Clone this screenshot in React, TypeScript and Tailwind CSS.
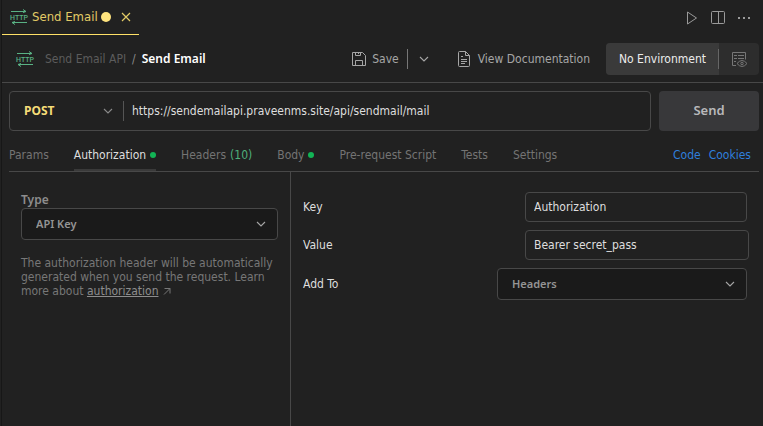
import React, { useId, useState } from "react";

type IconProps = { className?: string };

function HttpIcon({ className = "" }: IconProps) {
  return (
    <svg viewBox="0 0 18 16" aria-hidden="true" className={`h-4 w-[18px] shrink-0 overflow-visible text-[#59b184] ${className}`}>
      <g fill="none" stroke="currentColor" strokeWidth="1">
        <path d="M1 2.500h15M13 0.500l3 2-3 1" />
        <path d="M17 13.500H2M5 12.500l-3 1 3 2" />
      </g>
      <text
        x="9"
        y="11"
        textAnchor="middle"
        fill="currentColor"
        className="font-['Roboto',sans-serif] text-[7px] font-medium"
      >
        HTTP
      </text>
    </svg>
  );
}

function Chevron({ className = "" }: IconProps) {
  return (
    <svg viewBox="0 0 10 6" aria-hidden="true" className={`h-[6px] w-[10px] shrink-0 ${className}`}>
      <path d="M1 1l4 4 4-4" fill="none" stroke="currentColor" strokeWidth="1.1" />
    </svg>
  );
}

function SaveIcon() {
  return (
    <svg viewBox="0 0 16 16" aria-hidden="true" className="size-4 shrink-0" fill="none" stroke="currentColor">
      <path d="M1.500 1.500h10l3 3v10h-13zM4.500 1.500v3h5v-3M4.500 14.500v-5h7v5M7.500 2v1" />
    </svg>
  );
}

function DocumentIcon() {
  return (
    <svg viewBox="0 0 14 16" aria-hidden="true" className="h-4 w-[14px] shrink-0" fill="none" stroke="currentColor">
      <path d="M2.500 0.500h6l4 4v10q0 1-1 1h-9q-1 0-1-1v-13q0-1 1-1zM8.500 0.500v4h4M4 5.500h2M4 8.500h6M4 10.500h6M4 12.500h4" />
    </svg>
  );
}

function EnvironmentIcon() {
  return (
    <svg viewBox="0 0 16 16" aria-hidden="true" className="size-4" fill="none" stroke="currentColor">
      <path d="M5 14.500H1.500v-13h13v7M3 4.500h3M7 4.500h6M3 7.500h3M7 7.500h6M3 10.500h2" />
      <path d="M6 12.500q5-6 10 0-5 6-10 0z" />
      <circle cx="11" cy="12.500" r="1.200" />
    </svg>
  );
}

type SelectProps = {
  id?: string;
  label?: string;
  options: string[];
  className: string;
  chevronClass: string;
};

function Select({ id, label, options, className, chevronClass }: SelectProps) {
  return (
    <div className="grid items-center">
      <select
        id={id}
        aria-label={label}
        className={`col-start-1 row-start-1 w-full appearance-none font-['Noto_Sans',sans-serif] outline-none ${className}`}
      >
        {options.map((o) => (
          <option key={o}>{o}</option>
        ))}
      </select>
      <Chevron className={`pointer-events-none col-start-1 row-start-1 justify-self-end ${chevronClass}`} />
    </div>
  );
}

const boxedSelect =
  "h-8 rounded border border-[#484848] bg-[#1a1a1a] px-[14px] text-[11px] font-semibold text-[#949494]";
const boxedInput =
  "h-[30px] w-full rounded border border-[#484848] bg-transparent px-2 text-[12px] text-[#dedede] outline-none";

const tabs = [
  { name: "Params" },
  { name: "Authorization", dot: true },
  { name: "Headers", count: 10 },
  { name: "Body", dot: true },
  { name: "Pre-request Script" },
  { name: "Tests" },
  { name: "Settings" },
];

function EditorTabs() {
  return (
    <header className="flex h-[35px] items-stretch justify-between">
      <div className="flex w-[137px] items-center border-b border-[#ffe167] pl-2 text-[#e3cb66]">
        <HttpIcon />
        <span className="ml-1 text-[13px] whitespace-nowrap">Send Email</span>
        <span className="ml-[3px] size-[10px] rounded-full bg-[#ffe47e]" />
        <button aria-label="Close tab" className="ml-[10px]">
          <svg viewBox="0 0 10 10" className="size-[10px]" fill="none" stroke="currentColor" strokeWidth="1.2">
            <path d="M1 1l8 8M9 1l-8 8" />
          </svg>
        </button>
      </div>
      <div className="flex items-center gap-3 pr-3 text-[#9a9a9a]">
        <button aria-label="Run">
          <svg viewBox="0 0 14 14" className="size-[14px]" fill="none" stroke="currentColor">
            <path d="M2.500 1v12l9-6z" />
          </svg>
        </button>
        <button aria-label="Split editor">
          <svg viewBox="0 0 14 14" className="size-[14px]" fill="none" stroke="currentColor">
            <path d="M1.500 0.500h11q1 0 1 1v10q0 1-1 1h-11q-1 0-1-1v-10q0-1 1-1zM7.500 1v11" />
          </svg>
        </button>
        <button aria-label="More actions">
          <svg viewBox="0 0 14 14" className="size-[14px]" fill="currentColor">
            <path d="M1 6h2v2H1zM6 6h2v2H6zM11 6h2v2h-2z" />
          </svg>
        </button>
      </div>
    </header>
  );
}

function Toolbar() {
  return (
    <div className="flex h-12 items-center border-b border-[#484848] pr-1 pl-[14px] text-[12px] whitespace-nowrap">
      <HttpIcon />
      <nav aria-label="Breadcrumb" className="ml-[11px] flex gap-[6px]">
        <span className="text-[#5c5c5c]">Send Email API</span>
        <span className="text-[#8a8a8a]">/</span>
        <span className="font-['Noto_Sans',sans-serif] font-semibold text-white">Send Email</span>
      </nav>
      <div className="ml-auto flex items-center text-[#a6a6a6]">
        <button className="flex items-center gap-[5px]">
          <SaveIcon />
          Save
        </button>
        <span className="ml-2 h-5 w-px bg-[#777]" />
        <button aria-label="Save options" className="ml-[11px]">
          <Chevron />
        </button>
        <button className="ml-7 flex items-center gap-[7px]">
          <DocumentIcon />
          View Documentation
        </button>
        <div className="ml-4 flex h-8 items-center rounded bg-[#2d2d2d]">
          <button className="flex h-full w-[113px] items-center justify-center rounded-l bg-[#3a3a3a] text-[#ececec]">
            No Environment
          </button>
          <span className="-ml-px h-5 w-px bg-[#666]" />
          <button aria-label="View environment" className="flex w-10 justify-center text-[#777]">
            <EnvironmentIcon />
          </button>
        </div>
      </div>
    </div>
  );
}

function RequestBar() {
  const [url, setUrl] = useState("https://sendemailapi.praveenms.site/api/sendmail/mail");
  return (
    <form className="flex gap-2 pt-2 pr-1 pl-[7px]" onSubmit={(e) => e.preventDefault()}>
      <div className="flex h-10 min-w-0 flex-1 items-center rounded border border-[#484848]">
        <div className="w-[113px]">
          <Select
            label="Method"
            options={["POST", "GET", "PUT", "DELETE"]}
            className="pl-[14px] text-[12px] font-bold text-[#f5dc78]"
            chevronClass="mr-[10px] text-[#8a8a8a]"
          />
        </div>
        <input
          aria-label="Request URL"
          value={url}
          onChange={(e) => setUrl(e.target.value)}
          className="h-5 min-w-0 flex-1 border-l border-[#555] bg-transparent pl-2 text-[12px] text-[#dedede] outline-none"
        />
      </div>
      <button className="h-10 w-[100px] rounded bg-[#38383a] font-['Noto_Sans',sans-serif] text-[13px] font-semibold text-[#b9b9bb]">
        Send
      </button>
    </form>
  );
}

function RequestTabs() {
  return (
    <div className="mr-1 ml-[7px] flex h-[41px] items-stretch justify-between border-b border-[#484848] pr-2 text-[12px] whitespace-nowrap">
      <div role="tablist" className="flex gap-[25px]">
        {tabs.map((t) => {
          const active = t.name === "Authorization";
          return (
            <button
              key={t.name}
              role="tab"
              aria-selected={active}
              className={`flex items-center border-b-2 pt-[10px] ${
                active ? "border-[#3a3a3a] text-[#dedede]" : "border-transparent text-[#747474]"
              }`}
            >
              {t.name}
              {t.dot && <span className="ml-1 size-[6px] rounded-full bg-[#12b455]" />}
              {t.count && <span className="ml-1 text-[#4fae7b]">({t.count})</span>}
            </button>
          );
        })}
      </div>
      <div className="flex items-center gap-2 border-b-2 border-transparent pt-[10px] text-[#2f7fdc]">
        <a href="#code">Code</a>
        <a href="#cookies">Cookies</a>
      </div>
    </div>
  );
}

function AuthType() {
  const id = useId();
  return (
    <section className="w-[282px] shrink-0 border-r border-[#484848] px-3 pt-5">
      <label htmlFor={id} className="block font-['Noto_Sans',sans-serif] text-[12px] leading-4 font-semibold text-[#8d8d8d]">
        Type
      </label>
      <Select id={id} options={["API Key", "Bearer Token", "No Auth"]} className={boxedSelect} chevronClass="mr-3 text-[#a6a6a6]" />
      <p className="mt-4 text-[12px] leading-[14px] text-[#777]">
        The authorization header will be automatically generated when you send the request. Learn more about{" "}
        <a href="#authorization" className="inline-block text-[#8d8d8d] underline">
          authorization
        </a>
        <svg viewBox="0 0 8 8" aria-hidden="true" className="ml-[5px] inline size-2 align-baseline" fill="none" stroke="currentColor">
          <path d="M1 7.500l6-6M1.500 1.500h5.500v5" />
        </svg>
      </p>
    </section>
  );
}

function ApiKeyForm() {
  const id = useId();
  const [key, setKey] = useState("Authorization");
  const [value, setValue] = useState("Bearer secret_pass");
  return (
    <section className="flex min-w-0 flex-1 flex-col gap-2 pt-5 pl-3 text-[12px] text-[#dedede]">
      <div className="flex items-center justify-between pr-4">
        <label htmlFor={`${id}-key`}>Key</label>
        <div className="w-[222px]">
          <input id={`${id}-key`} value={key} onChange={(e) => setKey(e.target.value)} className={boxedInput} />
        </div>
      </div>
      <div className="flex items-center justify-between pr-[14px]">
        <label htmlFor={`${id}-value`}>Value</label>
        <div className="w-[224px]">
          <input id={`${id}-value`} value={value} onChange={(e) => setValue(e.target.value)} className={boxedInput} />
        </div>
      </div>
      <div className="flex items-center justify-between pr-4">
        <label htmlFor={`${id}-target`}>Add To</label>
        <div className="w-[250px]">
          <Select id={`${id}-target`} options={["Headers", "Query Params"]} className={boxedSelect} chevronClass="mr-3 text-[#a6a6a6]" />
        </div>
      </div>
    </section>
  );
}

export default function App() {
  return (
    <div className="flex min-h-screen bg-[#212121] font-['DejaVu_Sans_Condensed','Noto_Sans',sans-serif]">
      <main className="ml-px flex min-w-0 flex-1 flex-col border-l border-[#171717]">
        <EditorTabs />
        <Toolbar />
        <RequestBar />
        <RequestTabs />
        <div className="flex flex-1 pl-[7px]">
          <AuthType />
          <ApiKeyForm />
        </div>
      </main>
    </div>
  );
}
